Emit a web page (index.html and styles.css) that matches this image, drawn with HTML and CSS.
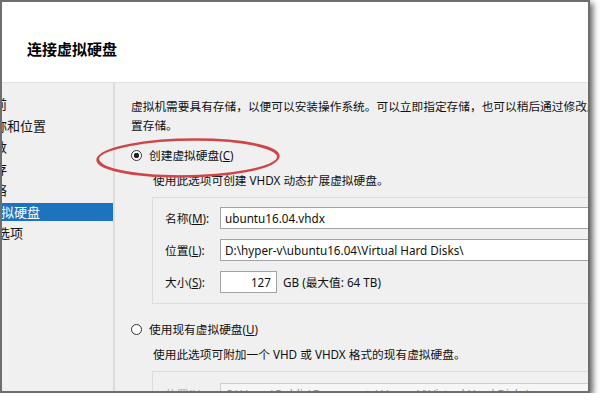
FILE: index.html
```html
<!DOCTYPE html>
<html lang="zh-CN">
<head>
  <meta charset="UTF-8">
  <meta name="viewport" content="width=device-width, initial-scale=1.0">
  <title>新建虚拟机向导 - 连接虚拟硬盘</title>
  <link rel="stylesheet" href="styles.css">
</head>
<body>
  <div class="window">
    <header class="wizard-head"><h1>连接虚拟硬盘</h1></header>
    <div class="wizard-body">
      <nav class="steps"><ul>
        <li>开始之前</li><li>指定名称和位置</li><li>指定代数</li><li>分配内存</li><li>配置网络</li><li class="current">连接虚拟硬盘</li><li>安装选项</li><li>摘要</li>
      </ul></nav>
      <main class="page">
        <p class="intro">虚拟机需要具有存储，以便可以安装操作系统。可以立即指定存储，也可以稍后通过修改虚拟机属性来配置存储。</p>

        <label class="option"><input type="radio" name="disk" checked><span>创建虚拟硬盘(<u>C</u>)</span></label>
        <p class="hint">使用此选项可创建 VHDX 动态扩展虚拟硬盘。</p>
        <div class="group">
          <div class="field"><label>名称(<u>M</u>):</label><input type="text" value="ubuntu16.04.vhdx"></div>
          <div class="field"><label>位置(<u>L</u>):</label><input type="text" value="D:\hyper-v\ubuntu16.04\Virtual Hard Disks\"></div>
          <div class="field"><label>大小(<u>S</u>):</label><input type="text" class="size" value="127"><span class="unit">GB (最大值: 64 TB)</span></div>
        </div>

        <label class="option"><input type="radio" name="disk"><span>使用现有虚拟硬盘(<u>U</u>)</span></label>
        <p class="hint">使用此选项可附加一个 VHD 或 VHDX 格式的现有虚拟硬盘。</p>
        <div class="group off">
          <div class="field"><label>位置(<u>L</u>):</label><input type="text" value="C:\Users\Public\Documents\Hyper-V\Virtual Hard Disks\" disabled></div>
        </div>
      </main>
    </div>
    <svg class="mark" width="586" height="390" viewBox="0 0 586 390">
      <g transform="translate(186 156) skewX(-22)">
        <ellipse rx="90" ry="18.5" fill="none" stroke="#cf4649" stroke-width="2.5"/>
      </g>
    </svg>
  </div>
</body>
</html>
```

FILE: styles.css
```css
:root{--panel:#f0f0f0;--line:#dcdcdc;--text:#111;--select:#1e73be}
body{margin:0;background:#fff;font-family:"Segoe UI","Noto Sans","Noto Sans CJK SC",sans-serif;color:var(--text)}
.window{position:relative;width:586px;height:389px;border:2px solid #6e6e6e;background:var(--panel);overflow:hidden;box-shadow:3px 3px 6px rgba(0,0,0,.6)}
.wizard-head{height:80px;background:#fff;border-bottom:1px solid #e1e1e1}
.wizard-head h1{margin:0;padding:37px 0 0 25px;font-size:15px;line-height:20px;font-weight:bold;color:#000;font-family:"Noto Sans CJK SC",sans-serif}
.wizard-body{display:flex;height:308px}
.steps{width:111px;flex:none;border-right:2px solid var(--line);overflow:hidden}
.steps ul{list-style:none;margin:0;padding:12px 0 0;display:flex;flex-direction:column;gap:3.5px}
.steps li{height:18px;line-height:18px;font-size:13px;white-space:nowrap;overflow:hidden;text-indent:-47px}
.steps li.current{background:var(--select);color:#fff;text-indent:-40px}
.steps li.current+li{text-indent:-31px}
.page{flex:1;min-width:0;padding:14px 0 0 16px;font-size:11.7px;line-height:19px;overflow:hidden}
.intro{margin:0;width:46.4em}
.option{display:flex;align-items:center;gap:7px;height:18px;margin-top:11px}
.option input{appearance:none;-webkit-appearance:none;margin:0;width:11px;height:11px;flex:none;box-sizing:border-box;border:1px solid #333;border-radius:50%;background:#fff}
.option input:checked{background:radial-gradient(circle,#222 0 2.4px,#fff 3px)}
.hint{margin:7px 0 0 22px;white-space:nowrap}
.group{margin:7px 0 0 21px;width:600px;border:1px solid var(--line);padding:9px 0 10px 12px;display:flex;flex-direction:column;gap:10px}
.group+.option{margin-top:16px}
.field{display:flex;align-items:center;height:22px}
.field label{width:55px;flex:none}
.field input{width:420px;height:22px;margin:0;box-sizing:border-box;border:1px solid #a3a3a3;background:#fff;padding:0 4px;font:inherit;color:var(--text)}
.field input.size{width:57px;text-align:right;padding-right:5px}
.unit{margin-left:6px}
.group.off{padding-top:11px}
.group.off label{color:#a4a4a4}
.group.off input{background:#f6f6f6;border-color:#cdcdcd;color:#959595}
.mark{position:absolute;top:0;left:0;pointer-events:none}
```
